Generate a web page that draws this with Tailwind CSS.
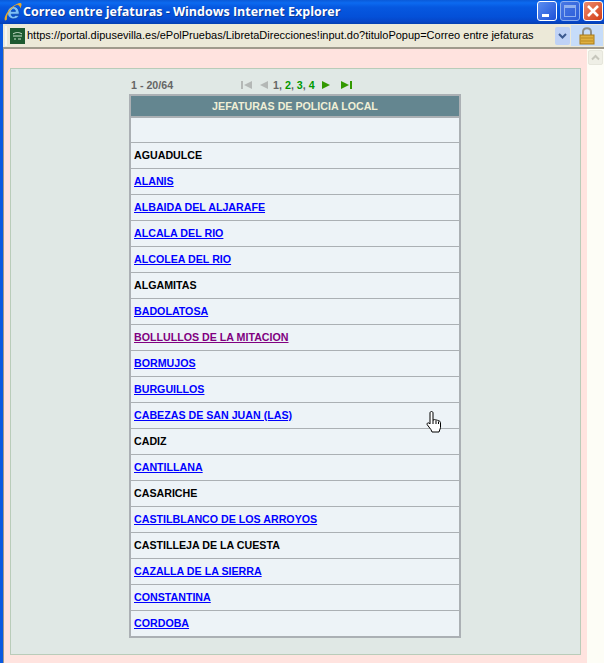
<!DOCTYPE html>
<html lang="es">
<head>
<meta charset="utf-8">
<title>Correo entre jefaturas</title>
<script src="https://cdn.jsdelivr.net/npm/@tailwindcss/browser@4"></script>
</head>
<body class="m-0 overflow-hidden bg-white">
<div class="relative flex h-[663px] w-[604px] flex-col overflow-hidden font-['Liberation_Sans',sans-serif]">
  <!-- Title bar -->
  <div class="flex h-[24px] shrink-0 items-center bg-[linear-gradient(180deg,#0a5ad8_0%,#0c6af0_12%,#0658e0_30%,#0450d8_70%,#0646c8_90%,#0440b0_100%)]">
    <svg class="ml-[4px] h-[20px] w-[18px] shrink-0" viewBox="0 0 18 20">
      <path d="M9.500 4.500c-3.400 0-6 2.700-6 6.300s2.600 6 6 6c2.600 0 4.500-1.200 5.400-3.300h-3.600c-.5.700-1 1-1.800 1-1.300 0-2.200-.9-2.300-2.300h8c.2-4.400-2.200-7.700-5.700-7.700zM7.200 9.400c.2-1.300 1-2.200 2.200-2.200s2 .9 2.100 2.200z" fill="#7cc0f8" stroke="#0a3a9a" stroke-width=".6"/>
      <path d="M1 18.500c-1.500-2 1.500-8 5-11.500 4-4 9-6.800 11-5.800 1 .7.500 3-.6 5.200-.4-2-1.400-3.400-3-3.700C9 3.500 2 12 3 17c.1.500-1.200 1.800-2 1.500z" fill="#e8a92c"/>
    </svg>
    <span class="ml-[1px] whitespace-nowrap font-['Open_Sans',sans-serif] text-[12.500px] leading-none font-bold text-white [text-shadow:1px_1px_0_#0a3a9a]">Correo entre jefaturas - Windows Internet Explorer</span>
    <div class="ml-auto mr-[1px] mt-[-2px] flex gap-[3px]">
      <div class="relative h-[20px] w-[20px] rounded-[3px] border border-white bg-[linear-gradient(135deg,#5c8ef0,#1c50d8)]"><div class="absolute bottom-[3px] left-[4px] h-[3px] w-[7px] bg-white"></div></div>
      <div class="relative h-[20px] w-[20px] rounded-[3px] border border-[#8fb0ee] bg-[linear-gradient(135deg,#4878e4,#2a5cd8)]"><div class="absolute left-[3px] top-[3px] h-[12px] w-[12px] border border-t-[3px] border-[#8fb0ee]"></div></div>
      <div class="h-[20px] w-[20px] rounded-[3px] border border-white bg-[linear-gradient(135deg,#ec8c70,#d23c14)]">
        <svg class="h-full w-full" viewBox="0 0 18 18"><path d="M4 4l10 10M14 4L4 14" stroke="#fff" stroke-width="2.600"/></svg>
      </div>
    </div>
  </div>
  <!-- Address bar -->
  <div class="flex h-[23px] shrink-0 items-center border-l-[3px] border-[#0a5ae0] bg-[#ece9d8]">
    <div class="ml-[2px] h-[20px] w-[2px] bg-[#f8f7f0]"></div>
    <svg class="ml-[3px] h-[16px] w-[15px] shrink-0" viewBox="0 0 15 16">
      <rect width="15" height="16" fill="#1d5a30"/>
      <path d="M3 6c3-2 6-2 9 0M3 8h9M4 11h2M8 11h3" stroke="#cfe3cf" stroke-width="1" fill="none"/>
    </svg>
    <span class="ml-[2px] whitespace-nowrap font-['Liberation_Sans',sans-serif] text-[11px] leading-none text-black">https://portal.dipusevilla.es/ePolPruebas/LibretaDirecciones!input.do?tituloPopup=Correo entre jefaturas</span>
    <div class="ml-auto flex h-[18px] w-[15px] items-center justify-center rounded-[2px] bg-[#bfd2f6]">
      <svg class="h-[8px] w-[9px]" viewBox="0 0 9 8"><path d="M1 2l3.500 3.500L8 2" fill="none" stroke="#3c5a90" stroke-width="2"/></svg>
    </div>
    <div class="ml-[1px] mr-[1px] flex h-[21px] w-[32px] items-center justify-center bg-[#c6dcf9]">
      <svg class="h-[18px] w-[16px]" viewBox="0 0 16 18">
        <path d="M4 8V5c0-5 8-5 8 0v3" fill="none" stroke="#8f8f86" stroke-width="2"/>
        <rect x="1" y="8" width="14" height="9" fill="#e0b040" stroke="#a87a18"/>
        <path d="M2 11h12M2 14h12" stroke="#b88a20"/>
      </svg>
    </div>
  </div>
  <!-- Viewport -->
  <div class="flex min-h-0 flex-1 border-l-[3px] border-[#0a5ae0]">
    <div class="flex min-w-0 flex-1 flex-col border-l border-t-2 border-l-[#a09a8c] border-t-[#a09a8c] bg-[#ffe3df] pl-[6px] pr-[6px] pt-[19px] pb-[8px]">
      <!-- Panel -->
      <div class="flex flex-1 flex-col border border-[#b9ccb9] bg-[#e0e8e5] pl-[118px]">
        <div class="w-[332px]">
          <div class="flex h-[25px] items-center pt-[6px] text-[10.670px] font-bold">
            <span class="ml-[2px] text-[#666666]">1 - 20/64</span>
            <div class="ml-[68px] flex items-center">
              <svg class="h-[8px] w-[11px]" viewBox="0 0 11 8"><path d="M0 0h2v8H0zM3 4l8-4v8z" fill="#b4b8b6"/></svg>
              <svg class="ml-[8px] h-[8px] w-[8px]" viewBox="0 0 8 8"><path d="M8 0v8L0 4z" fill="#b4b8b6"/></svg>
              <span class="ml-[5px] whitespace-nowrap text-[#666666]">1, <span class="text-[#009900]">2</span>, <span class="text-[#009900]">3</span>, <span class="text-[#009900]">4</span></span>
              <svg class="ml-[7px] h-[8px] w-[8px]" viewBox="0 0 8 8"><path d="M0 0v8l8-4z" fill="#339900"/></svg>
              <svg class="ml-[11px] h-[8px] w-[11px]" viewBox="0 0 11 8"><path d="M0 0v8l8-4zM9 0h2v8H9z" fill="#339900"/></svg>
            </div>
          </div>
          <div class="border-2 border-[#abb0b4] bg-[#edf3f7] text-[10.670px] font-bold">
            <div class="flex h-[20px] items-center justify-center bg-[#648690] text-[#efefd6]">JEFATURAS DE POLICIA LOCAL</div>
            <div class="box-content h-[24px] border-t-2 border-b border-[#abb0b4]"></div>
            <div class="flex h-[26px] items-center border-b border-[#abb0b4] pb-[2px] pl-[3px] text-black">AGUADULCE</div>
            <div class="flex h-[26px] items-center border-b border-[#abb0b4] pb-[2px] pl-[3px]"><a href="#" class="text-[#0000ff] underline">ALANIS</a></div>
            <div class="flex h-[26px] items-center border-b border-[#abb0b4] pb-[2px] pl-[3px]"><a href="#" class="text-[#0000ff] underline">ALBAIDA DEL ALJARAFE</a></div>
            <div class="flex h-[26px] items-center border-b border-[#abb0b4] pb-[2px] pl-[3px]"><a href="#" class="text-[#0000ff] underline">ALCALA DEL RIO</a></div>
            <div class="flex h-[26px] items-center border-b border-[#abb0b4] pb-[2px] pl-[3px]"><a href="#" class="text-[#0000ff] underline">ALCOLEA DEL RIO</a></div>
            <div class="flex h-[26px] items-center border-b border-[#abb0b4] pb-[2px] pl-[3px] text-black">ALGAMITAS</div>
            <div class="flex h-[26px] items-center border-b border-[#abb0b4] pb-[2px] pl-[3px]"><a href="#" class="text-[#0000ff] underline">BADOLATOSA</a></div>
            <div class="flex h-[26px] items-center border-b border-[#abb0b4] pb-[2px] pl-[3px]"><a href="#" class="text-[#800080] underline">BOLLULLOS DE LA MITACION</a></div>
            <div class="flex h-[26px] items-center border-b border-[#abb0b4] pb-[2px] pl-[3px]"><a href="#" class="text-[#0000ff] underline">BORMUJOS</a></div>
            <div class="flex h-[26px] items-center border-b border-[#abb0b4] pb-[2px] pl-[3px]"><a href="#" class="text-[#0000ff] underline">BURGUILLOS</a></div>
            <div class="flex h-[26px] items-center border-b border-[#abb0b4] pb-[2px] pl-[3px]"><a href="#" class="text-[#0000ff] underline">CABEZAS DE SAN JUAN (LAS)</a></div>
            <div class="flex h-[26px] items-center border-b border-[#abb0b4] pb-[2px] pl-[3px] text-black">CADIZ</div>
            <div class="flex h-[26px] items-center border-b border-[#abb0b4] pb-[2px] pl-[3px]"><a href="#" class="text-[#0000ff] underline">CANTILLANA</a></div>
            <div class="flex h-[26px] items-center border-b border-[#abb0b4] pb-[2px] pl-[3px] text-black">CASARICHE</div>
            <div class="flex h-[26px] items-center border-b border-[#abb0b4] pb-[2px] pl-[3px]"><a href="#" class="text-[#0000ff] underline">CASTILBLANCO DE LOS ARROYOS</a></div>
            <div class="flex h-[26px] items-center border-b border-[#abb0b4] pb-[2px] pl-[3px] text-black">CASTILLEJA DE LA CUESTA</div>
            <div class="flex h-[26px] items-center border-b border-[#abb0b4] pb-[2px] pl-[3px]"><a href="#" class="text-[#0000ff] underline">CAZALLA DE LA SIERRA</a></div>
            <div class="flex h-[26px] items-center border-b border-[#abb0b4] pb-[2px] pl-[3px]"><a href="#" class="text-[#0000ff] underline">CONSTANTINA</a></div>
            <div class="flex h-[25px] items-center pb-[2px] pl-[3px]"><a href="#" class="text-[#0000ff] underline">CORDOBA</a></div>
          </div>
        </div>
      </div>
    </div>
    <!-- Scrollbar -->
    <div class="w-[17px] shrink-0 border-t-2 border-t-[#a09a8c] bg-[#fdfdf6] pl-[1px] pr-[1px] pt-[1px]">
      <div class="flex h-[15px] w-[15px] items-center justify-center rounded-[2px] border border-[#e6e6dc] bg-[#efefe6]">
        <svg class="h-[7px] w-[9px]" viewBox="0 0 9 7"><path d="M1 5.500l3.500-3.500L8 5.500" fill="none" stroke="#c6c6bc" stroke-width="2"/></svg>
      </div>
    </div>
  </div>
  <!-- Mouse cursor -->
  <svg class="absolute left-[426px] top-[410px] h-[24px] w-[18px]" viewBox="0 0 18 24">
    <path d="M5.500 1.500c1 0 1.500.7 1.500 1.500v7l1-.2c.6-.4 1.500-.2 2 .4.700-.4 1.600-.2 2 .5.800-.3 1.800.1 2 1l.5 1v5l-1.500 4.300H6l-1-2.300-3.800-5c-.7-1.200.7-2.500 2-1.500L4 14V3c0-.8.500-1.500 1.500-1.500z" fill="#fff" stroke="#000" stroke-width="1"/>
    <path d="M7 10v4M10 10.500V14M12.500 11.500V14" stroke="#000" stroke-width="1" fill="none"/>
  </svg>
</div>
</body>
</html>
